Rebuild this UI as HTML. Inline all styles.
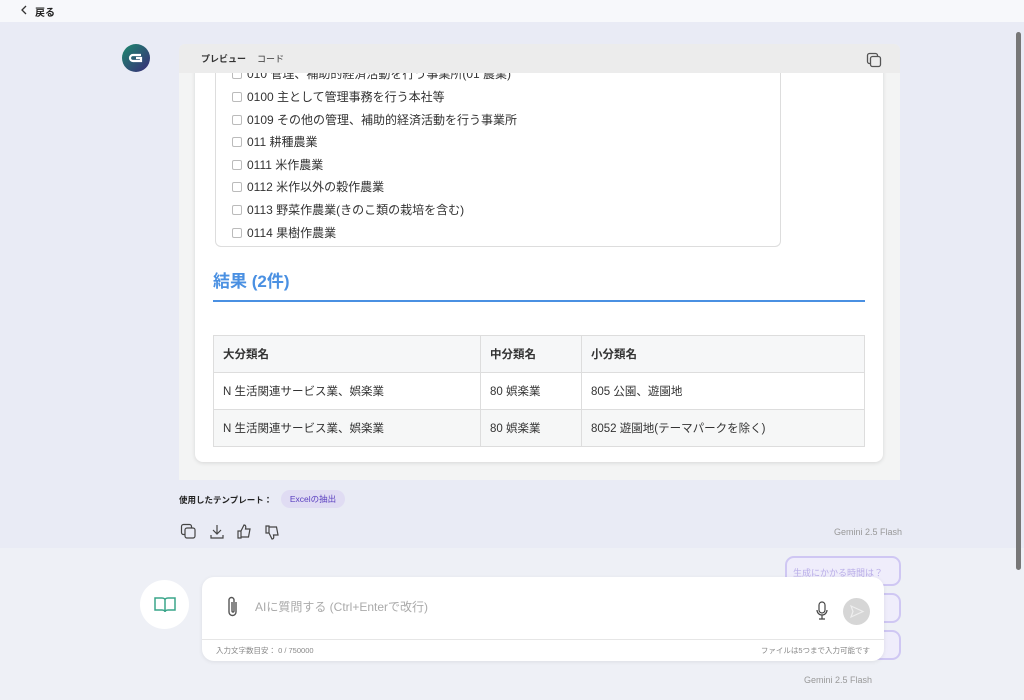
<!DOCTYPE html>
<html><head><meta charset="utf-8"><style>
*{box-sizing:border-box;margin:0;padding:0}
body{width:1024px;height:700px;overflow:hidden;background:#e9ebf5;font-family:"Liberation Sans","Noto Sans CJK JP",sans-serif;position:relative;color:#333}
.top{position:absolute;left:0;top:0;width:1024px;height:22px;background:#f7f8fb;font-size:10px;font-weight:bold;color:#222}
.abs{position:absolute}
.lower{position:absolute;left:0;top:548px;width:1024px;height:152px;background:#eef0f6}
.pv{position:absolute;left:179px;top:44px;width:721px;height:436px;background:#f3f4f4;overflow:hidden;border-radius:6px 6px 0 0}
.pvh{position:absolute;left:0;top:0;width:721px;height:29px;background:#ececec;font-size:9px;z-index:2}
.card{position:absolute;left:16px;top:-40px;width:688px;height:458px;background:#fff;border-radius:8px;box-shadow:0 1px 4px rgba(0,0,0,.12)}
.list{position:absolute;left:20px;top:0;width:566px;height:243px;border:1px solid #ddd;border-top:none;border-radius:0 0 6px 6px}
.row{position:absolute;left:16px;font-size:12px;color:#333;height:16px;line-height:16px}
.row i{display:inline-block;width:10px;height:10px;border:1px solid #bbb;border-radius:2px;vertical-align:-1px;margin-right:5px}
table{position:absolute;left:18px;top:331px;width:652px;border-collapse:collapse;font-size:11.5px}
td,th{border:1px solid #ddd;height:37px;padding-left:9px;text-align:left}
th{background:#f6f7f8;font-weight:bold}
tr.alt td{background:#f6f7f7}
</style></head><body>
<div class="top"><svg class="abs" style="left:20px;top:5px" width="8" height="10" fill="none" stroke="#333" stroke-width="1.3"><path d="M6 1L2 5l4 4"/></svg><span class="abs" style="left:35px;top:4px">戻る</span></div>
<div class="lower"></div>
<div class="abs" style="left:122px;top:44px;width:28px;height:28px;border-radius:50%;background:linear-gradient(135deg,#1d8a6e,#3a2a78)"><svg width="28" height="28"><path d="M19 11H11a3 3 0 000 6h8v-3h-5" fill="none" stroke="#fff" stroke-width="2.2"/></svg></div>
<div class="pv">
 <div class="pvh"><span class="abs" style="left:22px;top:8px;font-weight:bold">プレビュー</span><span class="abs" style="left:78px;top:8px">コード</span>
 <svg class="abs" style="left:686px;top:7px" width="18" height="18" fill="none" stroke="#555" stroke-width="1.3"><rect x="2.5" y="2.5" width="10" height="10" rx="2"/><rect x="5.5" y="5.5" width="10" height="10" rx="2" fill="#ececec"/></svg></div>
 <div class="card">
  <div class="list">
   <div class="row" style="top:62px"><i></i>010 管理、補助的経済活動を行う事業所(01 農業)</div>
   <div class="row" style="top:85px"><i></i>0100 主として管理事務を行う本社等</div>
   <div class="row" style="top:108px"><i></i>0109 その他の管理、補助的経済活動を行う事業所</div>
   <div class="row" style="top:130px"><i></i>011 耕種農業</div>
   <div class="row" style="top:153px"><i></i>0111 米作農業</div>
   <div class="row" style="top:175px"><i></i>0112 米作以外の穀作農業</div>
   <div class="row" style="top:198px"><i></i>0113 野菜作農業(きのこ類の栽培を含む)</div>
   <div class="row" style="top:221px"><i></i>0114 果樹作農業</div>
  </div>
  <div class="abs" style="left:18px;top:263px;font-size:17px;font-weight:bold;color:#4a90e2">結果 (2件)</div>
  <div class="abs" style="left:18px;top:296px;width:652px;height:2px;background:#4a90e2"></div>
  <table>
   <tr><th style="width:267px">大分類名</th><th style="width:101px">中分類名</th><th>小分類名</th></tr>
   <tr><td>N 生活関連サービス業、娯楽業</td><td>80 娯楽業</td><td>805 公園、遊園地</td></tr>
   <tr class="alt"><td>N 生活関連サービス業、娯楽業</td><td>80 娯楽業</td><td>8052 遊園地(テーマパークを除く)</td></tr>
  </table>
 </div>
</div>
<div class="abs" style="left:179px;top:494px;font-size:8.5px;font-weight:bold;color:#222">使用したテンプレート：</div>
<div class="abs" style="left:281px;top:490px;width:64px;height:18px;border-radius:9px;background:#e0dcf3;color:#5a3fc0;font-size:8.5px;text-align:center;line-height:18px">Excelの抽出</div>
<svg class="abs" style="left:180px;top:523px" width="110" height="18" fill="none" stroke="#444" stroke-width="1.2">
<rect x="1.5" y="1.5" width="10" height="10" rx="2"/><rect x="5" y="5" width="10" height="10" rx="2" fill="#e9ebf5"/>
<path d="M37 2v9M33 7l4 4 4-4M31 12v3h12v-3"/>
<path d="M58 8v7h3V8zM61 8l3-6c2 0 2 2 1.5 4H70l-1.5 8H61"/>
<path d="M86 10V3h3v7zM89 10l3 6c2 0 2-2 1.5-4H98l-1.5-8H89"/></svg>
<div class="abs" style="left:834px;top:527px;font-size:9px;color:#999">Gemini 2.5 Flash</div>
<div class="abs" style="left:785px;top:556px;width:116px;height:30px;border:2px solid #cfc7f3;border-radius:9px;background:#efedfb;color:#b9ade8;font-size:9px;padding:8px 6px">生成にかかる時間は？</div>
<div class="abs" style="left:785px;top:593px;width:116px;height:30px;border:2px solid #cfc7f3;border-radius:9px;background:#efedfb"></div>
<div class="abs" style="left:785px;top:630px;width:116px;height:30px;border:2px solid #cfc7f3;border-radius:9px;background:#efedfb"></div>
<div class="abs" style="left:140px;top:580px;width:49px;height:49px;border-radius:50%;background:#fff"><svg class="abs" style="left:14px;top:16px" width="22" height="18" fill="none" stroke="#3aa58a" stroke-width="1.5"><path d="M1 2h7c2 0 3 1 3 2v12c0-1-1-2-3-2H1zM21 2h-7c-2 0-3 1-3 2v12c0-1 1-2 3-2h7z"/></svg></div>
<div class="abs" style="left:202px;top:577px;width:682px;height:84px;background:#fff;border-radius:12px;box-shadow:0 1px 4px rgba(0,0,0,.08)">
 <svg class="abs" style="left:23px;top:18px" width="16" height="24" fill="none" stroke="#555" stroke-width="1.4"><path d="M11 7v10a3.5 3.5 0 01-7 0V5a2.5 2.5 0 015 0v11a1 1 0 01-2 0V7"/></svg>
 <div class="abs" style="left:53px;top:21px;font-size:12px;color:#aaa">AIに質問する (Ctrl+Enterで改行)</div>
 <svg class="abs" style="left:613px;top:24px" width="14" height="20" fill="none" stroke="#444" stroke-width="1.2"><rect x="4" y="1" width="6" height="11" rx="3"/><path d="M2 9a5 5 0 0010 0M7 14v4M4 18h6"/></svg>
 <div class="abs" style="left:641px;top:21px;width:27px;height:27px;border-radius:50%;background:#d6d6d6"><svg width="27" height="27" fill="none" stroke="#eee" stroke-width="1.2"><path d="M8 8l12 5.5L8 19l2-5.5z"/></svg></div>
 <div class="abs" style="left:0;top:62px;width:682px;height:1px;background:#e6e6e6"></div>
 <div class="abs" style="left:14px;top:68px;font-size:7.5px;color:#888">入力文字数目安： 0 / 750000</div>
 <div class="abs" style="right:14px;top:68px;font-size:7.5px;color:#888">ファイルは5つまで入力可能です</div>
</div>
<div class="abs" style="left:804px;top:675px;font-size:9px;color:#999">Gemini 2.5 Flash</div>
<div class="abs" style="left:1016px;top:32px;width:5px;height:538px;border-radius:3px;background:#777"></div>
</body></html>
